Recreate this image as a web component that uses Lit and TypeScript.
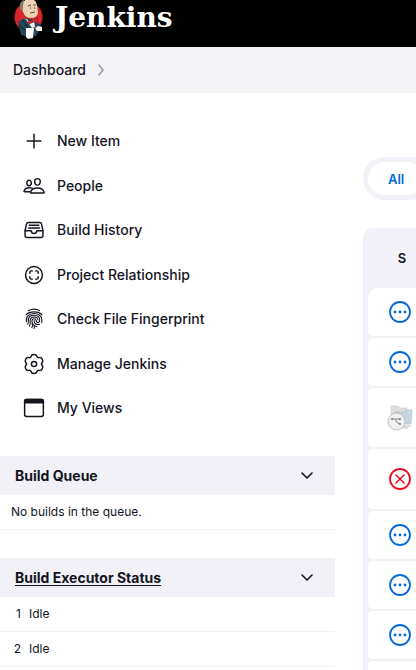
import { LitElement, html, svg, css } from "lit";
import { customElement } from "lit/decorators.js";

const plus = svg`<path d="M256 96v320M96 256h320"/>`;

const people = svg`
  <path d="M402 158c-3 45-33 78-66 78s-63-33-66-78c-3-44 26-74 66-74s69 32 66 74z"/>
  <path d="M336 304c-72 0-146 32-160 100-2 9 4 17 12 17h290c8 0 14-8 12-17-14-68-82-100-154-100z"/>
  <path d="M194 186c-2 36-27 62-53 62s-51-26-53-62c-2-34 21-62 53-62s55 28 53 62z"/>
  <path d="M212 306c-20-8-42-11-65-11-56 0-108 25-123 82-1 6 3 13 10 13h122"/>`;

const tray = svg`
  <path d="M384 80H128c-26 0-43 14-48 40L48 272v112a48 48 0 0048 48h320a48 48 0 0048-48V272l-32-152c-5-27-23-40-48-40z"/>
  <path d="M48 272h144M320 272h144M192 272a64 64 0 00128 0M144 144h224M128 208h256"/>`;

const relation = svg`
  <circle cx="256" cy="256" r="196"/>
  <path d="M296 352h23a33 33 0 0033-33v-23M216 352h-23a33 33 0 01-33-33v-23M296 160h23a33 33 0 0133 33v23M216 160h-23a33 33 0 00-33 33v23"/>`;

const fingerprint = svg`
  <g stroke-width="25">
    <path d="M126 62C200 22 312 22 386 62"/>
    <path d="M70 162C150 66 362 66 442 162"/>
    <path d="M80 318C44 70 440 76 440 276c0 26-2 46-6 66"/>
    <path d="M108 376c30-40 12-74 18-116 24-132 262-118 262 14 4 84-78 78-82 20-8-68-98-54-98 4 2 82 56 124 116 138"/>
    <path d="M150 422c36-60 10-96 18-144 14-88 170-92 180 0"/>
    <path d="M204 458c24-34 20-68 8-100"/>
    <path d="M256 478c8-16 10-32 6-50M258 290c0 78 52 110 128 88"/>
  </g>`;

/* Six rounded lobes: a quadratic spline through the midpoints of a control ring. */
function gearOutline(): string {
  const ring: [number, number][] = [];
  for (let lobe = 0; lobe < 6; lobe++) {
    const middle = lobe * 60 - 90;
    for (const [turn, radius] of [[-14, 230], [14, 230], [30, 158]]) {
      const angle = ((middle + turn) * Math.PI) / 180;
      ring.push([256 + radius * Math.cos(angle), 256 + radius * Math.sin(angle)]);
    }
  }
  const mid = (i: number) => {
    const a = ring[i % ring.length];
    const b = ring[(i + 1) % ring.length];
    return `${Math.round((a[0] + b[0]) / 2)} ${Math.round((a[1] + b[1]) / 2)}`;
  };
  const curves = ring.map((_, i) => {
    const [x, y] = ring[(i + 1) % ring.length];
    return `Q${Math.round(x)} ${Math.round(y)} ${mid(i + 1)}`;
  });
  return `M${mid(0)}${curves.join("")}z`;
}

const gear = svg`<circle cx="256" cy="256" r="60"/><path d=${gearOutline()}/>`;

const windowIcon = svg`
  <rect x="38" y="58" width="436" height="396" rx="44"/>
  <path class="solid" d="M38 136V98q0-40 44-40h348q44 0 44 40v38z"/>`;

const dots = svg`
  <circle cx="11" cy="11" r="10"/>
  <g class="dots"><circle cx="6" cy="11" r="1.4"/><circle cx="11" cy="11" r="1.4"/><circle cx="16" cy="11" r="1.4"/></g>`;

const cross = svg`<circle cx="11" cy="11" r="10"/><path stroke-width="1.6" d="M7 7l8 8M15 7l-8 8"/>`;

const tasks = [
  { label: "New Item", icon: plus },
  { label: "People", icon: people },
  { label: "Build History", icon: tray },
  { label: "Project Relationship", icon: relation },
  { label: "Check File Fingerprint", icon: fingerprint },
  { label: "Manage Jenkins", icon: gear },
  { label: "My Views", icon: windowIcon },
];

const jobs = ["idle", "idle", "folder", "failed", "idle", "idle", "idle", "idle"];

const butler = html`
  <svg class="butler" viewBox="0 0 30 40" aria-hidden="true">
    <ellipse cx="14.500" cy="17" rx="14" ry="14.500" fill="#d7262b"/>
    <path d="M4 22q3-3 9-4l6 2 7 4 2 4-3 3-3 5-8 1-7-2-1-5z" fill="#25465a"/>
    <path d="M8 4q2-5 8-5 6 0 7 6l1 8q-1 5-7 5-6 0-8-6l-3-4z" fill="#efd2b4"/>
    <path d="M6 4q2-4 4-4l-1 6 0 5-2-1q-2-3-1-6z" fill="#8b7b70"/>
    <path d="M14 6l3-1M19 5l3 0M16 13l5-1" stroke="#5e4539" fill="none"/>
    <path d="M16 8h1M20 8h1" stroke="#222"/>
    <path d="M11 18l6 4 3-2 1 7-3 1z" fill="#f4f4f4"/>
    <path d="M14 20l5 1 4-3 1 5-4-1-5 2z" fill="#d7262b" stroke="#76171b" stroke-width=".5"/>
    <path d="M9 20l5 8M5 25l6 5" stroke="#101f2a" fill="none"/>
    <path d="M12 28l8 0-1 10-5 1-2-2z" fill="#fff"/>
    <path d="M21 28l3-2 4 1v4l-5 0z" fill="#f7eee5"/>
  </svg>`;

const folder = html`
  <svg class="folder" viewBox="0 0 26 26" role="img" aria-label="Multibranch">
    <path d="M4 1h7l2 2h7v14H4z" fill="#dedede" stroke="#cdcdcd" stroke-width=".6"/>
    <path d="M8 7l10 0 1-2h6l-1 14H8z" fill="#c5d6e2" stroke="#a9bfce" stroke-width=".6"/>
    <path d="M16 21h8M16 23h5" stroke="#c0c0c0"/>
    <circle cx="9.500" cy="16.500" r="8.500" fill="#f0f0ef" stroke="#b4b4b4" stroke-width=".8"/>
    <path d="M5 14h8M8 14q2 5 5 5" stroke="#888" fill="none"/>
    <circle cx="5" cy="14" r="1" fill="#777"/><circle cx="13" cy="14" r="1" fill="#777"/><circle cx="13" cy="19" r="1" fill="#777"/>
  </svg>`;

@customElement("app-root")
export class AppRoot extends LitElement {
  static styles = css`
    :host {
      --text: #14141f;
      --panel: #f2f1f7;
      display: block;
      height: 100vh;
      overflow: hidden;
      background: #fff;
      color: var(--text);
      font: 500 14px/20px Inter, sans-serif;
    }
    * { box-sizing: border-box; }
    a { color: inherit; text-decoration: none; }
    svg { display: block; flex: none; }
    .header { height: 47px; background: #000; overflow: hidden; }
    .brand { display: flex; align-items: flex-start; gap: 11px; padding-left: 14px; color: #fff; }
    .butler { width: 30px; height: 40px; }
    .name { font: 700 28px/36px "DejaVu Serif", serif; }
    .crumbs { display: flex; align-items: center; gap: 10px; height: 46px; padding-left: 13px; background: #f4f4f7; }
    .line { fill: none; stroke: currentColor; stroke-linecap: round; stroke-linejoin: round; }
    .crumb-arrow { color: #9b99ae; stroke-width: 1.6; }
    .body { display: grid; grid-template-columns: 335px minmax(200px, 1fr); column-gap: 28px; }
    .tasks { display: grid; min-height: 312px; margin: 26px 0 25px; padding: 0; list-style: none; }
    .task { display: flex; align-items: center; gap: 12px; min-height: 44px; padding-left: 23px; }
    .task-icon { width: 22px; height: 22px; stroke-width: 34; }
    .solid { fill: currentColor; }
    .dots { fill: currentColor; stroke: none; }
    .pane { margin-bottom: 28px; }
    .pane-head { display: flex; align-items: center; justify-content: space-between; height: 39px; padding: 0 21px 0 15px; background: var(--panel); }
    .pane-title { margin: 0; font-size: 14px; font-weight: 700; }
    .underlined { text-decoration: underline; text-underline-offset: 2px; }
    .toggle { padding: 0; border: 0; background: none; color: inherit; }
    .chevron { stroke-width: 1.6; }
    .queue, .executors { width: 100%; border-spacing: 0; font-size: 12px; font-weight: 400; line-height: 16px; }
    .queue td, .executors td { height: 35px; padding: 0; border-bottom: 1px solid var(--panel); }
    .queue td { padding-left: 11px; }
    .executors .number { width: 29px; padding-right: 8px; text-align: right; }
    .main { padding-top: 64px; }
    .tabs { display: flex; height: 43px; padding: 5px; border-radius: 22px; background: var(--panel); }
    .tab { display: flex; align-items: center; padding: 0 20px; border-radius: 17px; background: #fff; color: #006adc; font-size: 13px; font-weight: 600; }
    .jobs { width: 100%; margin-top: 28px; padding: 0 5px; border-spacing: 0 2px; border-radius: 10px; background: var(--panel); }
    .jobs th { height: 56px; padding: 0 0 0 4px; font-size: 13px; font-weight: 600; text-align: center; }
    .jobs .state { width: 64px; }
    .jobs td { height: 48px; padding: 0; background: #fff; }
    .jobs td.state { border-radius: 5px 0 0 5px; }
    .jobs tr.first td.state { border-top-left-radius: 10px; }
    .jobs tr.group td { height: 59px; }
    .jobs tr.tall td { height: 60px; }
    .status { width: 22px; height: 22px; margin: 0 auto; stroke-width: 1.8; }
    .idle { color: #006adc; }
    .failed { color: #f00a24; }
    .folder { width: 26px; height: 26px; margin: 0 auto; }
  `;

  private pane(title: string, linked: boolean, body: unknown) {
    return html`<section class="pane">
      <header class="pane-head">
        <h2 class="pane-title">${linked ? html`<a class="underlined" href="#computer">${title}</a>` : title}</h2>
        <button class="toggle" aria-label="Toggle ${title}">
          <svg class="line chevron" width="14" height="14" viewBox="0 0 14 14"><path d="M2 4l5 5 5-5"/></svg>
        </button>
      </header>
      ${body}
    </section>`;
  }

  private status(kind: string) {
    if (kind === "folder") return folder;
    return html`<svg class="line status ${kind}" viewBox="0 0 22 22" role="img" aria-label=${kind}>
      ${kind === "failed" ? cross : dots}
    </svg>`;
  }

  private rowClass(kind: string, index: number) {
    if (index === 0) return "first";
    return kind === "folder" ? "group" : kind === "failed" ? "tall" : "";
  }

  render() {
    return html`
      <header class="header">
        <a class="brand" href="#home">${butler}<span class="name">Jenkins</span></a>
      </header>
      <nav class="crumbs" aria-label="Breadcrumb">
        <a href="#dashboard">Dashboard</a>
        <svg class="line crumb-arrow" width="10" height="12" viewBox="0 0 10 12"><path d="M3 1l4 5-4 5"/></svg>
      </nav>
      <div class="body">
        <aside>
          <ul class="tasks">
            ${tasks.map((t) => html`<li><a class="task" href="#task">
              <svg class="line task-icon" viewBox="0 0 512 512" aria-hidden="true">${t.icon}</svg>${t.label}</a></li>`)}
          </ul>
          ${this.pane("Build Queue", false, html`<table class="queue"><tr><td>No builds in the queue.</td></tr></table>`)}
          ${this.pane("Build Executor Status", true, html`<table class="executors">
            ${[1, 2].map((n) => html`<tr><td class="number">${n}</td><td>Idle</td></tr>`)}
          </table>`)}
        </aside>
        <main class="main">
          <nav class="tabs"><a class="tab" href="#all">All</a></nav>
          <table class="jobs">
            <thead><tr><th class="state">S</th><th></th></tr></thead>
            <tbody>
              ${jobs.map((kind, i) => html`<tr class=${this.rowClass(kind, i)}>
                <td class="state">${this.status(kind)}</td><td></td>
              </tr>`)}
            </tbody>
          </table>
        </main>
      </div>`;
  }
}
